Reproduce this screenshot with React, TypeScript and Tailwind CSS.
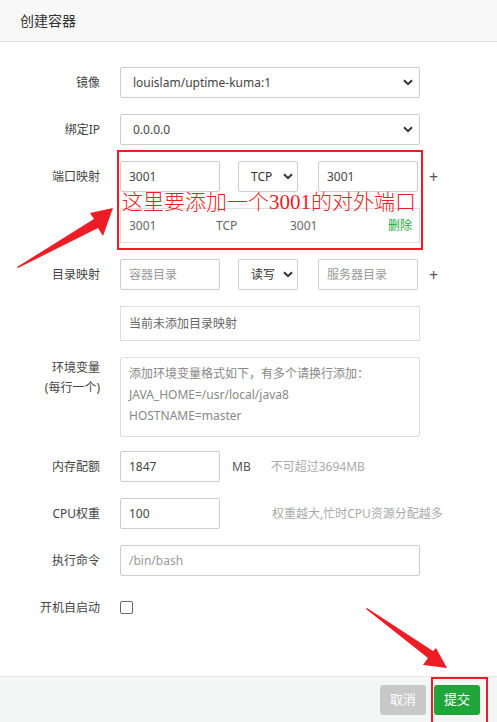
import type { ReactNode } from "react";

const font = { fontFamily: '"Noto Sans", "Noto Sans CJK SC", sans-serif' };

function Chevron() {
  return (
    <svg width="10" height="7" viewBox="0 0 10 7" className="shrink-0">
      <path d="M1 1.2 L5 5.2 L9 1.2" fill="none" stroke="#333" strokeWidth="2" />
    </svg>
  );
}

function Row({ label, children, top = false, className = "" }: { label: ReactNode; children: ReactNode; top?: boolean; className?: string }) {
  return (
    <div className={`${top ? "flex items-start" : "flex items-center"} ${className}`}>
      <div className={`w-[100px] shrink-0 text-right text-[12px] text-[#444] leading-[20px] ${top ? "pt-[1px]" : ""}`}>{label}</div>
      <div className="ml-[20px] flex items-center">{children}</div>
    </div>
  );
}

function Select({ value, wide }: { value: string; wide?: boolean }) {
  return (
    <div className={`flex h-[31px] items-center justify-between rounded-[2px] border border-[#ccc] bg-white ${wide ? "w-[300px] pl-[12px] pr-[6px] text-[#444]" : "w-[60px] pl-[12px] pr-[4px] text-[#333]"} text-[12px]`}>
      <span>{value}</span>
      <Chevron />
    </div>
  );
}

function Input({ value, placeholder, w = "w-[100px]" }: { value?: string; placeholder?: string; w?: string }) {
  return (
    <div className={`flex h-[31px] ${w} items-center rounded-[2px] border border-[#ccc] bg-white pl-[8px] text-[12px] ${value ? "text-[#444]" : "text-[#999]"}`}>
      {value ?? placeholder}
    </div>
  );
}

export default function App() {
  return (
    <div className="relative flex h-[722px] w-[497px] flex-col overflow-hidden bg-white" style={font}>
      <div className="flex h-[42px] shrink-0 items-center border-b border-[#e5e5e5] bg-[#f8f8f8] pl-[20px] text-[14px] text-[#333]">创建容器</div>

      <div className="flex flex-1 flex-col gap-[16px] pt-[25px]">
        <Row label="镜像"><Select value="louislam/uptime-kuma:1" wide /></Row>
        <Row label="绑定IP"><Select value="0.0.0.0" wide /></Row>
        <div className="flex flex-col gap-[16px]">
          <Row label="端口映射">
            <Input value="3001" />
            <div className="ml-[18px]"><Select value="TCP" /></div>
            <div className="ml-[20px]"><Input value="3001" /></div>
            <span className="ml-[11px] text-[16px] leading-none text-[#555]">+</span>
          </Row>
          <div className="ml-[120px] flex h-[35px] w-[300px] items-center border border-[#ddd] pl-[8px] pr-[7px] text-[12px] text-[#666]">
            <span className="w-[87px]">3001</span>
            <span className="w-[74px]">TCP</span>
            <span>3001</span>
            <span className="ml-auto text-[#20a53a]">删除</span>
          </div>
        </div>
        <Row label="目录映射">
          <Input placeholder="容器目录" />
          <div className="ml-[18px]"><Select value="读写" /></div>
          <div className="ml-[20px]"><Input placeholder="服务器目录" /></div>
          <span className="ml-[11px] text-[16px] leading-none text-[#555]">+</span>
        </Row>
        <div className="ml-[120px] flex h-[35px] w-[300px] items-center border border-[#ddd] pl-[8px] text-[12px] text-[#666]">当前未添加目录映射</div>
        <Row top className="-mb-[2px]" label={<>环境变量<br />(每行一个)</>}>
          <div className="h-[80px] w-[300px] rounded-[2px] border border-[#ddd] px-[8px] pt-[5px] text-[12px] leading-[21px] text-[#888]">
            添加环境变量格式如下，有多个请换行添加：<br />JAVA_HOME=/usr/local/java8<br />HOSTNAME=master
          </div>
        </Row>
        <Row label="内存配额">
          <Input value="1847" />
          <span className="ml-[12px] text-[12px] text-[#555]">MB</span>
          <span className="ml-[20px] text-[12px] text-[#aaa]">不可超过3694MB</span>
        </Row>
        <Row label="CPU权重">
          <Input value="100" />
          <span className="ml-[52px] text-[12px] text-[#aaa]">权重越大,忙时CPU资源分配越多</span>
        </Row>
        <Row label="执行命令"><Input placeholder="/bin/bash" w="w-[300px]" /></Row>
        <Row label="开机自启动">
          <div className="my-[9px] h-[13px] w-[13px] rounded-[2px] border border-[#666] bg-white" />
        </Row>
      </div>

      <div className="flex h-[46px] shrink-0 items-start justify-end gap-[8px] border-t border-[#e8e8e8] bg-[#f4f6f5] pr-[17px] pt-[8px]">
        <button type="button" className="h-[30px] w-[46px] rounded-[3px] bg-[#c8c8c8] text-[13px] text-white">取消</button>
        <button type="button" className="h-[30px] w-[46px] rounded-[3px] bg-[#20a53a] text-[13px] text-white">提交</button>
      </div>

      {/* annotations */}
      <div className="pointer-events-none absolute left-[117px] top-[150px] h-[100px] w-[306px] border-2 border-[#ee1c25]" />
      <div className="pointer-events-none absolute left-[122px] top-[190px] text-[21px] font-light leading-[24px] text-[#ee1c25]" style={{ fontFamily: '"Liberation Serif", "Noto Sans CJK SC", serif' }}>这里要添加一个3001的对外端口</div>
      <div className="pointer-events-none absolute left-[431px] top-[677px] h-[50px] w-[57px] border-2 border-[#ee1c25]" />
      <svg className="pointer-events-none absolute left-0 top-0" width="497" height="722">
        <polygon fill="#ee1c25" points="17,267 94,219 90,213 113,208 103,236 98,228 18,268" />
        <polygon fill="#ee1c25" points="367,608 433,651 436,648 447,668 423,665 428,658 366,609" />
      </svg>
    </div>
  );
}
